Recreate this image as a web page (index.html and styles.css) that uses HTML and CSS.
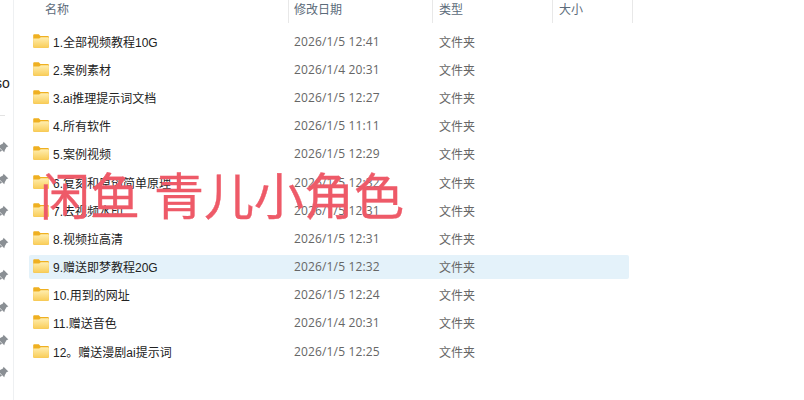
FILE: index.html
```html
<!DOCTYPE html>
<html lang="zh-CN">
<head>
  <meta charset="UTF-8" />
  <title>文件夹</title>
  <link rel="stylesheet" href="styles.css">
</head>
<body>
  <svg class="icon-defs" width="0" height="0" aria-hidden="true">
    <defs>
      <linearGradient id="folderFill" x1="0" y1="0" x2="0" y2="1">
        <stop offset="0" stop-color="#ffeeb0" />
        <stop offset="1" stop-color="#f9cd58" />
      </linearGradient>
      <symbol id="folder" viewBox="0 0 16 14">
        <path d="M0.2 1.6C0.2 0.8 0.7 0.3 1.5 0.3H5.8L7.4 1.9H14.6C15.4 1.9 15.9 2.4 15.9 3.2V12.4C15.9 13.2 15.4 13.7 14.6 13.7H1.5C0.7 13.7 0.2 13.2 0.2 12.4Z" fill="#efb021" />
        <path d="M0.2 4.4H6.2L7.8 3.2H14.6C15.4 3.2 15.9 3.6 15.9 4.3V12.4C15.9 13.2 15.4 13.7 14.6 13.7H1.5C0.7 13.7 0.2 13.2 0.2 12.4Z" fill="url(#folderFill)" />
      </symbol>
      <symbol id="pin" viewBox="0 0 12 12">
        <path d="M7 0.6L11.4 5L9.8 5.6L8.2 8.2L7.6 10.4L1.6 4.4L3.8 3.8L6.4 2.2Z" fill="#8a8f94" />
        <path d="M3 6.4L0.6 11.4L5.6 9Z" fill="#8a8f94" />
      </symbol>
    </defs>
  </svg>

  <div class="window">
    <aside class="sidebar">
      <div class="cut-label">so</div>
      <div class="side-divider"></div>
      <div class="pins">
        <svg class="pin"><use href="#pin" /></svg>
        <svg class="pin"><use href="#pin" /></svg>
        <svg class="pin"><use href="#pin" /></svg>
        <svg class="pin"><use href="#pin" /></svg>
        <svg class="pin"><use href="#pin" /></svg>
        <svg class="pin"><use href="#pin" /></svg>
        <svg class="pin"><use href="#pin" /></svg>
        <svg class="pin"><use href="#pin" /></svg>
      </div>
    </aside>

    <main class="files">
      <div class="file-head">
        <div class="col-name">名称</div>
        <div class="col-date">修改日期</div>
        <div class="col-type">类型</div>
        <div class="col-size">大小</div>
      </div>

      <div class="file-list">
        <div class="file-row"><svg class="folder"><use href="#folder" /></svg><span class="file-name">1.全部视频教程10G</span><span class="file-date">2026/1/5 12:41</span><span class="file-type">文件夹</span></div>
        <div class="file-row"><svg class="folder"><use href="#folder" /></svg><span class="file-name">2.案例素材</span><span class="file-date">2026/1/4 20:31</span><span class="file-type">文件夹</span></div>
        <div class="file-row"><svg class="folder"><use href="#folder" /></svg><span class="file-name">3.ai推理提示词文档</span><span class="file-date">2026/1/5 12:27</span><span class="file-type">文件夹</span></div>
        <div class="file-row"><svg class="folder"><use href="#folder" /></svg><span class="file-name">4.所有软件</span><span class="file-date">2026/1/5 11:11</span><span class="file-type">文件夹</span></div>
        <div class="file-row"><svg class="folder"><use href="#folder" /></svg><span class="file-name">5.案例视频</span><span class="file-date">2026/1/5 12:29</span><span class="file-type">文件夹</span></div>
        <div class="file-row"><svg class="folder"><use href="#folder" /></svg><span class="file-name">6.复刻和原创简单原理</span><span class="file-date">2026/1/5 12:32</span><span class="file-type">文件夹</span></div>
        <div class="file-row"><svg class="folder"><use href="#folder" /></svg><span class="file-name">7.去视频水印</span><span class="file-date">2026/1/5 12:31</span><span class="file-type">文件夹</span></div>
        <div class="file-row"><svg class="folder"><use href="#folder" /></svg><span class="file-name">8.视频拉高清</span><span class="file-date">2026/1/5 12:31</span><span class="file-type">文件夹</span></div>
        <div class="file-row selected"><svg class="folder"><use href="#folder" /></svg><span class="file-name">9.赠送即梦教程20G</span><span class="file-date">2026/1/5 12:32</span><span class="file-type">文件夹</span></div>
        <div class="file-row"><svg class="folder"><use href="#folder" /></svg><span class="file-name">10.用到的网址</span><span class="file-date">2026/1/5 12:24</span><span class="file-type">文件夹</span></div>
        <div class="file-row"><svg class="folder"><use href="#folder" /></svg><span class="file-name">11.赠送音色</span><span class="file-date">2026/1/4 20:31</span><span class="file-type">文件夹</span></div>
        <div class="file-row"><svg class="folder"><use href="#folder" /></svg><span class="file-name">12。赠送漫剧ai提示词</span><span class="file-date">2026/1/5 12:25</span><span class="file-type">文件夹</span></div>
      </div>
    </main>
  </div>

  <div class="watermark">闲鱼 青儿小角色</div>
</body>
</html>
```

FILE: styles.css
```css
body {
  font-family: "Liberation Sans", "Noto Sans CJK SC", sans-serif;
  background: #fff;
  margin: 0;
  width: 804px;
  height: 400px;
  overflow: hidden;
  position: relative;
}

.icon-defs {
  position: absolute;
}

.window {
  display: flex;
  height: 400px;
}

.sidebar {
  width: 13px;
  border-right: 1px solid #eef0f2;
  overflow: hidden;
}

.cut-label {
  margin: 75px 0 0 -5px;
  font-size: 14px;
  line-height: 16px;
  color: #222;
}

.side-divider {
  width: 5px;
  height: 1px;
  margin-top: 24px;
  background: #e3e3e3;
}

.pins {
  display: flex;
  flex-direction: column;
  gap: 19.2px;
  margin-top: 24.5px;
  margin-left: -4px;
}

.pin {
  width: 13px;
  height: 13px;
  display: block;
}

.files {
  width: 619px;
}

.file-head {
  display: flex;
  height: 23px;
  font-size: 12px;
  line-height: 20px;
  color: #5c6b7a;
}

.file-head > div {
  padding-left: 6px;
  border-right: 1px solid #e8e8e8;
  box-sizing: border-box;
}

.file-head > .col-name {
  width: 275px;
  padding-left: 31px;
}

.file-head > .col-date {
  width: 144px;
  padding-left: 5px;
}

.col-type {
  width: 120px;
}

.col-size {
  width: 80px;
}

.file-list {
  margin-top: 4px;
  padding: 0 4px 0 15px;
}

.file-row {
  display: flex;
  align-items: center;
  height: 28.2px;
  font-size: 12px;
  color: #666;
}

.file-row.selected {
  background: #e4f2fa;
  border-radius: 2px;
  height: 24px;
  margin: 2.1px 0;
}

.folder {
  width: 16px;
  height: 14px;
  margin: -1px 0 0 4px;
  flex-shrink: 0;
}

.file-name {
  width: 241px;
  margin-left: 4px;
  color: #222;
}

.file-date {
  width: 145px;
  font-family: "Open Sans", sans-serif;
  letter-spacing: 0.15px;
}

.watermark {
  position: absolute;
  left: 40px;
  top: 163px;
  font-size: 50px;
  line-height: 70px;
  color: #ee5a68;
  -webkit-text-stroke: 0.4px #ee5a68;
  white-space: nowrap;
}
```
